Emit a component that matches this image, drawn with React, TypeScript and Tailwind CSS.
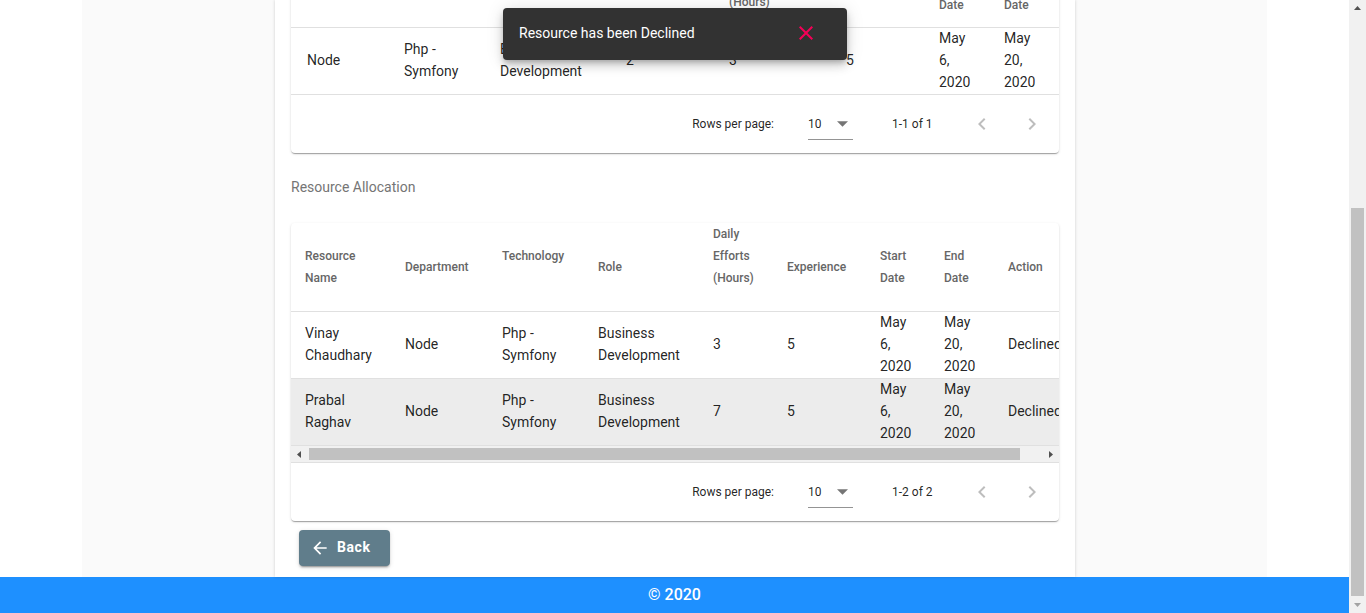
import React from "react";

const paper =
  "bg-white rounded-[4px] shadow-[0_2px_1px_-1px_rgba(0,0,0,0.2),0_1px_1px_0_rgba(0,0,0,0.14),0_1px_3px_0_rgba(0,0,0,0.12)]";

const Lines = ({ lines }: { lines: string[] }) => (
  <>
    {lines.map((l, i) => (
      <div key={i}>{l === "" ? "\u00a0" : l}</div>
    ))}
  </>
);

const ChevronLeft = () => (
  <svg width="24" height="24" viewBox="0 0 24 24" fill="rgba(0,0,0,0.26)">
    <path d="M15.41 7.41L14 6l-6 6 6 6 1.41-1.41L10.83 12z" />
  </svg>
);
const ChevronRight = () => (
  <svg width="24" height="24" viewBox="0 0 24 24" fill="rgba(0,0,0,0.26)">
    <path d="M10 6L8.59 7.41 13.17 12l-4.58 4.59L10 18l6-6z" />
  </svg>
);

const Pagination = ({ range }: { range: string }) => (
  <div className="h-[58px] flex items-center justify-end pr-[3px] text-[12px] text-[rgba(0,0,0,0.87)] whitespace-nowrap">
    <div>Rows per page:</div>
    <div className="ml-[34px] w-[45px] h-[32px] flex items-center border-b border-[rgba(0,0,0,0.42)]">
      <span>10</span>
      <svg className="ml-[15px]" width="11" height="6" viewBox="0 0 10 5" fill="rgba(0,0,0,0.54)">
        <path d="M0 0l5 5 5-5z" />
      </svg>
    </div>
    <div className="ml-[39px] w-[42px] whitespace-nowrap">{range}</div>
    <div className="ml-[24px] w-[48px] h-[48px] flex items-center justify-center">
      <ChevronLeft />
    </div>
    <div className="ml-[2px] w-[48px] h-[48px] flex items-center justify-center">
      <ChevronRight />
    </div>
  </div>
);

const cols2 = [
  "w-[100px]",
  "w-[97px]",
  "w-[96px]",
  "w-[115px]",
  "w-[74px]",
  "w-[93px]",
  "w-[64px]",
  "w-[64px]",
  "w-[94px]",
];

const head2: string[][] = [
  ["Resource", "Name"],
  ["Department"],
  ["Technology", ""],
  ["Role"],
  ["Daily", "Efforts", "(Hours)", ""],
  ["Experience"],
  ["Start", "Date"],
  ["End", "Date"],
  ["Action"],
];

const rows2: string[][][] = [
  [
    ["Vinay", "Chaudhary"],
    ["Node"],
    ["Php -", "Symfony"],
    ["Business", "Development"],
    ["3"],
    ["5"],
    ["May", "6,", "2020"],
    ["May", "20,", "2020"],
    ["Declined"],
  ],
  [
    ["Prabal", "Raghav"],
    ["Node"],
    ["Php -", "Symfony"],
    ["Business", "Development"],
    ["7"],
    ["5"],
    ["May", "6,", "2020"],
    ["May", "20,", "2020"],
    ["Declined"],
  ],
];

const cols1 = [
  "w-[97px]",
  "w-[96px]",
  "w-[126px]",
  "w-[103px]",
  "w-[117px]",
  "w-[93px]",
  "w-[65px]",
  "w-[71px]",
];

const head1: { lines: string[]; pb: string }[] = [
  { lines: ["Department"], pb: "pb-[40px]" },
  { lines: ["Technology"], pb: "pb-[40px]" },
  { lines: ["Role"], pb: "pb-[40px]" },
  { lines: ["No. of", "Resources"], pb: "pb-[40px]" },
  { lines: ["Daily", "Efforts", "(Hours)"], pb: "pb-[14px]" },
  { lines: ["Experience", "(Years)"], pb: "pb-[30px]" },
  { lines: ["Start", "Date"], pb: "pb-[11px]" },
  { lines: ["End", "Date"], pb: "pb-[11px]" },
];

const row1: string[][] = [
  ["Node"],
  ["Php -", "Symfony"],
  ["Business", "Development"],
  ["2"],
  ["3"],
  ["5"],
  ["May", "6,", "2020"],
  ["May", "20,", "2020"],
];

const ScrollArrow = ({ dir, color }: { dir: "up" | "down" | "left" | "right"; color: string }) => {
  const d =
    dir === "up"
      ? "M0 4L3.5 0 7 4z"
      : dir === "down"
      ? "M0 0L7 0 3.5 4z"
      : dir === "left"
      ? "M4 0L4 7 0 3.5z"
      : "M0 0L4 3.5 0 7z";
  const vertical = dir === "up" || dir === "down";
  return (
    <svg width={vertical ? 7 : 4} height={vertical ? 4 : 7} viewBox={vertical ? "0 0 7 4" : "0 0 4 7"} fill={color}>
      <path d={d} />
    </svg>
  );
};

export default function App() {
  return (
    <div className="relative w-[1366px] h-[613px] flex overflow-hidden bg-white font-['Roboto','Liberation_Sans',sans-serif]">
      <div className="w-[1349px] h-full flex flex-col">
        <div className="flex-1 flex min-h-0">
          <div className="w-[82px] bg-white" />
          <div className="w-[193px] bg-[#fafafa]" />
          <main className="w-[800px] bg-white px-4 flex flex-col overflow-hidden shadow-[0_0_3px_rgba(0,0,0,0.18)] z-10">
            {/* Card 1 */}
            <div className={`${paper} -mt-[33px] shrink-0 overflow-hidden`}>
              <div className="h-[61px] flex border-b border-[#e0e0e0] overflow-hidden">
                {head1.map((h, i) => (
                  <div
                    key={i}
                    className={`${cols1[i]} ${h.pb} shrink-0 pl-[16px] flex flex-col justify-end text-[12px] font-medium leading-[22px] text-[#666] whitespace-nowrap`}
                  >
                    <Lines lines={h.lines} />
                  </div>
                ))}
              </div>
              <div className="h-[67px] flex border-b border-[#e0e0e0]">
                {row1.map((c, i) => (
                  <div
                    key={i}
                    className={`${cols1[i]} shrink-0 pl-[16px] pb-[2px] flex flex-col justify-center text-[14px] leading-[22px] text-[rgba(0,0,0,0.87)] whitespace-nowrap`}
                  >
                    <Lines lines={c} />
                  </div>
                ))}
              </div>
              <Pagination range="1-1 of 1" />
            </div>

            <div className="mt-[24px] h-[20px] leading-[20px] text-[14px] text-[#757575]">Resource Allocation</div>

            {/* Card 2 */}
            <div className={`${paper} mt-[26px] shrink-0 overflow-hidden`}>
              <div className="w-[768px] overflow-hidden">
                <div className="w-[797px]">
                  <div className="h-[89px] flex border-b border-[#e0e0e0]">
                    {head2.map((h, i) => (
                      <div
                        key={i}
                        className={`${cols2[i]} shrink-0 pl-[14px] flex flex-col justify-center text-[12px] font-medium leading-[22px] text-[#666] whitespace-nowrap`}
                      >
                        <Lines lines={h} />
                      </div>
                    ))}
                  </div>
                  {rows2.map((r, ri) => (
                    <div
                      key={ri}
                      className={`h-[67px] flex border-b border-[#e0e0e0] ${ri === 1 ? "bg-[#ececec]" : ""}`}
                    >
                      {r.map((c, i) => (
                        <div
                          key={i}
                          className={`${cols2[i]} shrink-0 pl-[14px] pb-[2px] flex flex-col justify-center text-[14px] leading-[22px] text-[rgba(0,0,0,0.87)] whitespace-nowrap`}
                        >
                          <Lines lines={c} />
                        </div>
                      ))}
                    </div>
                  ))}
                </div>
              </div>
              {/* horizontal scrollbar */}
              <div className="h-[16px] bg-[#f1f1f1] flex items-center">
                <div className="w-[16px] h-[16px] flex items-center justify-center">
                  <ScrollArrow dir="left" color="#505050" />
                </div>
                <div className="ml-[2px] w-[711px] h-[12px] bg-[#c1c1c1]" />
                <div className="flex-1" />
                <div className="w-[16px] h-[16px] flex items-center justify-center">
                  <ScrollArrow dir="right" color="#505050" />
                </div>
              </div>
              <div className="border-t border-[#e0e0e0]" />
              <Pagination range="1-2 of 2" />
            </div>

            <button className="ml-[8px] mt-[9px] w-[91px] h-[36px] shrink-0 bg-[#607d8b] rounded-[4px] text-white font-bold text-[14px] tracking-[0.04em] flex items-center pl-[11px] pb-[1px] shadow-[0_3px_1px_-2px_rgba(0,0,0,0.2),0_2px_2px_0_rgba(0,0,0,0.14),0_1px_5px_0_rgba(0,0,0,0.12)]">
              <svg width="20" height="20" viewBox="0 0 24 24" fill="white">
                <path d="M20 11H7.83l5.59-5.59L12 4l-8 8 8 8 1.41-1.41L7.83 13H20v-2z" />
              </svg>
              <span className="ml-[7px]">Back</span>
            </button>
          </main>
          <div className="w-[192px] bg-[#fafafa]" />
          <div className="w-[82px] bg-white" />
        </div>
        <footer className="h-[36px] shrink-0 bg-[#1e90ff] flex items-center justify-center text-white text-[16px] font-medium">
          © 2020
        </footer>
      </div>

      {/* window scrollbar */}
      <div className="w-[17px] h-full bg-[#f1f1f1] flex flex-col items-center">
        <div className="h-[15px] w-full flex items-center justify-center">
          <ScrollArrow dir="up" color="#505050" />
        </div>
        <div className="mt-[193px] w-[13px] h-[388px] bg-[#c1c1c1]" />
        <div className="flex-1" />
        <div className="h-[16px] w-full flex items-center justify-center">
          <ScrollArrow dir="down" color="#a3a3a3" />
        </div>
      </div>

      {/* Snackbar */}
      <div className="absolute left-[503px] top-[8px] w-[344px] h-[52px] bg-[#323232] rounded-[4px] flex items-center pl-[16px] pb-[2px] text-white text-[14px] z-20 shadow-[0_3px_5px_-1px_rgba(0,0,0,0.2),0_6px_10px_0_rgba(0,0,0,0.14),0_1px_18px_0_rgba(0,0,0,0.12)]">
        <span>Resource has been Declined</span>
        <svg className="absolute left-[291px] top-[13px]" width="24" height="24" viewBox="0 0 24 24" fill="#f50057">
          <path d="M19 6.41L17.59 5 12 10.59 6.41 5 5 6.41 10.59 12 5 17.59 6.41 19 12 13.41 17.59 19 19 17.59 13.41 12z" />
        </svg>
      </div>
    </div>
  );
}
